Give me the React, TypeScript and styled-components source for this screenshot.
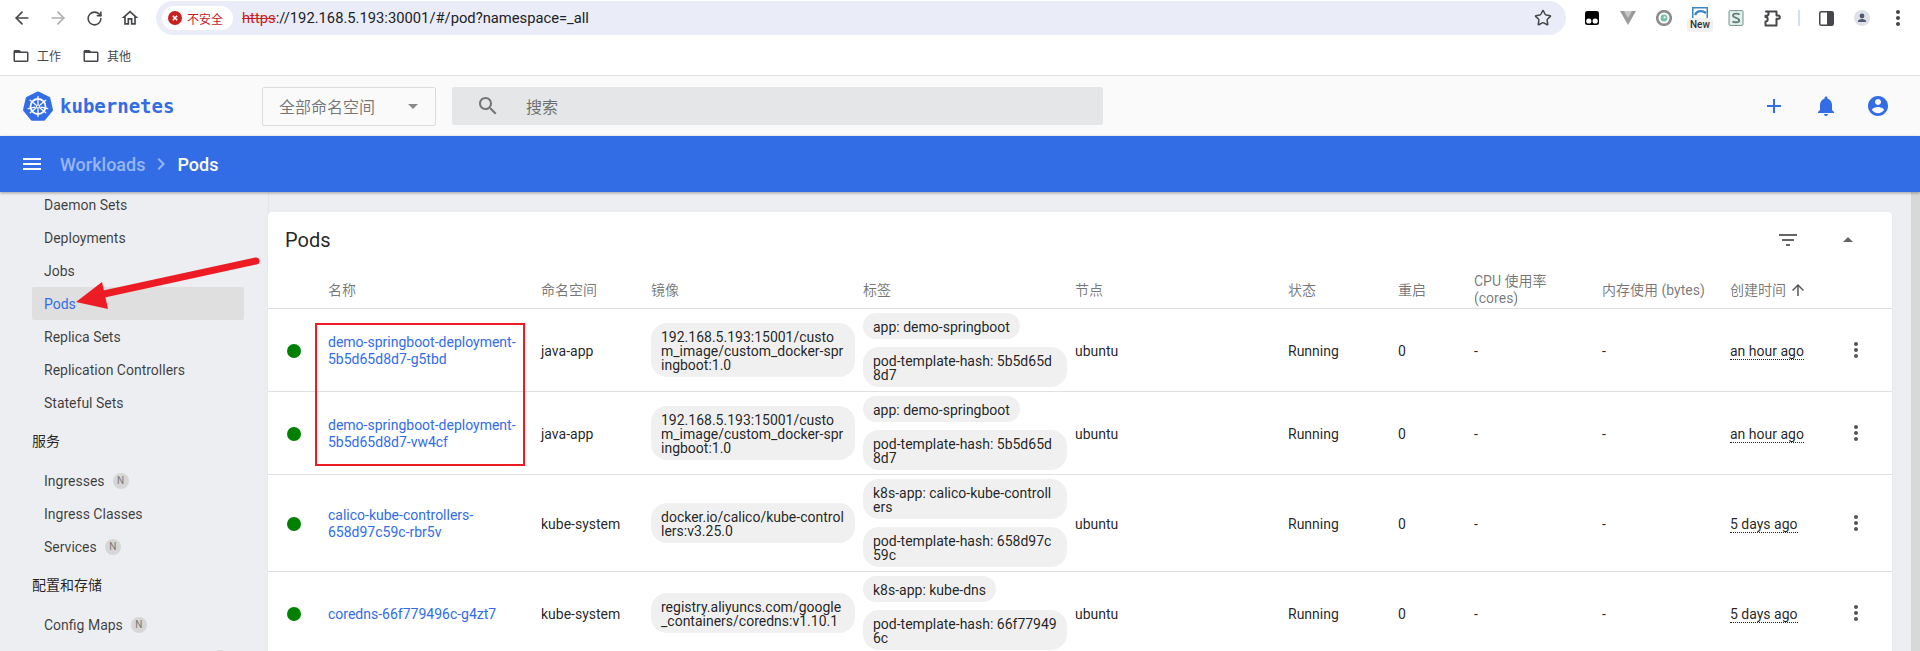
import { FC } from 'react';
import styled, { createGlobalStyle } from 'styled-components';
import { ArrowLeft, ArrowRight, RotateCw, Star } from 'lucide-react';

const FONT = `Roboto, "Noto Sans CJK SC", sans-serif`;
const BLUE = '#326de6';

const paths = {
  home: 'M12 5.69l5 4.5V18h-2v-6H9v6H7v-7.81l5-4.5M12 3L2 12h3v8h6v-6h2v6h6v-8h3L12 3z',
  folder:
    'M20 6h-8l-2-2H4c-1.1 0-1.99.9-1.99 2L2 18c0 1.1.9 2 2 2h16c1.1 0 2-.9 2-2V8c0-1.1-.9-2-2-2zm0 12H4V8h16v10z',
  search:
    'M15.5 14h-.79l-.28-.27C15.41 12.59 16 11.11 16 9.5 16 5.91 13.09 3 9.5 3S3 5.91 3 9.5 5.91 16 9.5 16c1.61 0 3.09-.59 4.23-1.57l.27.28v.79l5 4.99L20.49 19l-4.99-5zm-6 0C7.01 14 5 11.99 5 9.5S7.01 5 9.5 5 14 7.01 14 9.5 11.99 14 9.5 14z',
  plus: 'M19 13h-6v6h-2v-6H5v-2h6V5h2v6h6v2z',
  bell: 'M12 22c1.1 0 2-.9 2-2h-4c0 1.1.89 2 2 2zm6-6v-5c0-3.07-1.64-5.64-4.5-6.32V4c0-.83-.67-1.5-1.5-1.5s-1.5.67-1.5 1.5v.68C7.63 5.36 6 7.92 6 11v5l-2 2v1h16v-1l-2-2z',
  account:
    'M12 2C6.48 2 2 6.48 2 12s4.48 10 10 10 10-4.48 10-10S17.52 2 12 2zm0 3c1.66 0 3 1.34 3 3s-1.34 3-3 3-3-1.34-3-3 1.34-3 3-3zm0 14.2c-2.5 0-4.71-1.28-6-3.22.03-1.99 4-3.08 6-3.08 1.99 0 5.97 1.09 6 3.08-1.29 1.94-3.5 3.22-6 3.22z',
  menu: 'M3 18h18v-2H3v2zm0-5h18v-2H3v2zm0-7v2h18V6H3z',
  chevron: 'M10 6L8.59 7.41 13.17 12l-4.58 4.59L10 18l6-6z',
  more: 'M12 8c1.1 0 2-.9 2-2s-.9-2-2-2-2 .9-2 2 .9 2 2 2zm0 2c-1.1 0-2 .9-2 2s.9 2 2 2 2-.9 2-2-.9-2-2-2zm0 6c-1.1 0-2 .9-2 2s.9 2 2 2 2-.9 2-2-.9-2-2-2z',
  arrowUp: 'M4 12l1.41 1.41L11 7.83V20h2V7.83l5.58 5.59L20 12l-8-8-8 8z',
  filter: 'M10 18h4v-2h-4v2zM3 6v2h18V6H3zm3 7h12v-2H6v2z',
  caretUp: 'M7 14l5-5 5 5z',
  caretDown: 'M7 10l5 5 5-5z',
};

const GlobalStyle = createGlobalStyle`
  html, body {
    margin: 0;
    padding: 0;
    background: #edeef1;
    overflow: hidden;
  }
  * {
    box-sizing: border-box;
  }
`;

const Page = styled.div`
  position: relative;
  width: 1920px;
  height: 651px;
  overflow: hidden;
  display: flex;
  flex-direction: column;
  font-family: ${FONT};
  font-size: 14px;
  color: rgba(0, 0, 0, 0.87);
`;

const BrowserChrome = styled.div`
  flex: none;
  height: 76px;
  background: #fff;
  border-bottom: 1px solid #dfdfe1;
`;

const NavRow = styled.div`
  display: flex;
  align-items: flex-start;
  height: 36px;
`;

const NavButtons = styled.div`
  display: flex;
  width: 156px;
  padding-left: 4px;
`;

const NavButton = styled.div<{ $dim?: boolean }>`
  width: 36px;
  height: 36px;
  display: flex;
  align-items: center;
  justify-content: center;
  color: ${({ $dim }) => ($dim ? '#adaeb0' : '#45474a')};
`;

const AddressBar = styled.div`
  width: 1410px;
  height: 34px;
  margin-top: 1px;
  border-radius: 17px;
  background: #eaedf7;
  display: flex;
  align-items: center;
  padding: 0 14px 0 6px;
`;

const SecurityPill = styled.div`
  height: 24px;
  width: 71px;
  flex: none;
  border-radius: 12px;
  background: #fff;
  display: flex;
  align-items: center;
  gap: 5px;
  padding-left: 6px;
  font-size: 12px;
  color: #c5221f;
  white-space: nowrap;
`;

const Url = styled.div`
  margin-left: 9px;
  font-size: 14.75px;
  color: #202124;
  white-space: nowrap;
`;

const Scheme = styled.span`
  color: #c5221f;
  text-decoration: line-through;
`;

const StarButton = styled.div`
  margin-left: auto;
  display: flex;
  color: #45474a;
`;

const ExtTray = styled.div`
  display: flex;
  align-items: center;
  height: 36px;
  margin-left: 8px;
`;

const ExtSlot = styled.div`
  position: relative;
  width: 36px;
  height: 36px;
  display: flex;
  align-items: center;
  justify-content: center;
  color: #45474a;
`;

const TraySeparator = styled.div`
  width: 2px;
  height: 16px;
  margin: 0 8px;
  background: #cfdff8;
`;

const NewBadge = styled.span`
  position: absolute;
  left: 5px;
  top: 18px;
  padding: 0 3px;
  height: 14px;
  line-height: 14px;
  border-radius: 3px;
  background: #f1f1f1;
  font-size: 10px;
  font-weight: 500;
  color: #333;
`;

const BookmarksRow = styled.div`
  display: flex;
  align-items: center;
  height: 39px;
  padding: 0 0 0 12px;
  gap: 21px;
`;

const Bookmark = styled.div`
  display: flex;
  align-items: center;
  gap: 7px;
  font-size: 12px;
  color: #45474a;
`;

const AppBar = styled.div`
  flex: none;
  height: 60px;
  background: #fafafa;
  display: flex;
  align-items: center;
  padding-left: 23px;
`;

const Brand = styled.div`
  width: 239px;
  flex: none;
  display: flex;
  align-items: center;
  gap: 7px;
  color: ${BLUE};
`;

const BrandName = styled.span`
  font-family: 'DejaVu Sans Mono', monospace;
  font-size: 19px;
  font-weight: 700;
`;

const NamespaceSelect = styled.div`
  width: 174px;
  height: 39px;
  flex: none;
  border: 1px solid #dcdcdc;
  border-radius: 2px;
  display: flex;
  align-items: center;
  padding: 0 10px 0 16px;
  justify-content: space-between;
  font-size: 16px;
  color: rgba(0, 0, 0, 0.54);
`;

const SearchBox = styled.div`
  width: 651px;
  height: 38px;
  flex: none;
  margin-left: 16px;
  border-radius: 2px;
  background: #e4e6e7;
  display: flex;
  align-items: center;
  gap: 26px;
  padding-left: 24px;
  font-size: 16px;
  color: rgba(0, 0, 0, 0.54);
`;

const AppActions = styled.div`
  margin-left: auto;
  display: flex;
  gap: 28px;
  padding-right: 30px;
`;

const ActionBar = styled.div`
  position: relative;
  z-index: 2;
  flex: none;
  height: 56px;
  background: ${BLUE};
  box-shadow: 0 1px 3px rgba(0, 0, 0, 0.35);
  display: flex;
  align-items: center;
  padding-left: 20px;
  font-size: 18px;
  font-weight: 500;
  color: #fff;
`;

const Crumb = styled.span<{ $muted?: boolean }>`
  color: ${({ $muted }) => ($muted ? 'rgba(255,255,255,0.5)' : '#fff')};
`;

const CrumbSeparator = styled.span`
  display: flex;
  margin: 0 4px;
`;

const MenuGap = styled.div`
  width: 16px;
`;

const Body = styled.div`
  flex: 1;
  min-height: 0;
  display: flex;
  background: #edeef1;
`;

const Sidebar = styled.nav`
  width: 268px;
  flex: none;
  padding: 0 24px 0 32px;
  margin-top: -4px;
  box-shadow: 1px 0 1px rgba(0, 0, 0, 0.04);
`;

const SideSection = styled.div`
  height: 45px;
  line-height: 45px;
  color: rgba(0, 0, 0, 0.87);
`;

const SideItem = styled.div<{ $active?: boolean }>`
  height: 33px;
  display: flex;
  align-items: center;
  gap: 8px;
  padding-left: 12px;
  white-space: nowrap;
  border-radius: 2px;
  color: ${({ $active }) => ($active ? BLUE : 'rgba(0,0,0,0.75)')};
  background: ${({ $active }) => ($active ? '#dfdfdf' : 'transparent')};
`;

const NewChip = styled.span`
  width: 16px;
  height: 16px;
  border-radius: 50%;
  background: #d6d6d6;
  color: #777;
  font-size: 10px;
  line-height: 16px;
  text-align: center;
`;

const Main = styled.main`
  flex: 1;
  min-width: 0;
  padding: 20px 19px 0 0;
`;

const ScrollTrack = styled.div`
  width: 9px;
  flex: none;
  background: #d8d8d8;
`;

const Card = styled.section`
  background: #fff;
  border-radius: 4px;
  box-shadow: 0 1px 2px rgba(0, 0, 0, 0.1);
`;

const CardTitleRow = styled.div`
  height: 56px;
  display: flex;
  align-items: center;
  justify-content: space-between;
  padding: 0 32px 0 17px;
`;

const CardTitle = styled.h2`
  margin: 0;
  font-size: 20px;
  font-weight: 400;
`;

const CardActions = styled.div`
  display: flex;
  gap: 36px;
`;

const COLUMNS = '60px 213px 110px 212px 212px 213px 110px 76px 128px 128px 114px 24px';

const HeaderRow = styled.div`
  display: grid;
  grid-template-columns: ${COLUMNS};
  height: 40px;
  align-items: center;
  line-height: 17px;
  color: rgba(0, 0, 0, 0.54);
`;

const HeaderCell = styled.div`
  padding: 4px 16px 0 0;
  display: flex;
  align-items: center;
`;

const SortArrow = styled.span`
  display: flex;
  margin-left: 3px;
`;

const PodRow = styled.div`
  display: grid;
  grid-template-columns: ${COLUMNS};
  align-items: center;
  padding: 4px 0;
  border-top: 1px solid #e0e0e0;
`;

const StatusDot = styled.span`
  display: block;
  width: 14px;
  height: 14px;
  margin: 2px 0 0 19px;
  border-radius: 50%;
  background: #008000;
`;

const PodName = styled.a`
  display: block;
  padding: 2px 16px 0 0;
  line-height: 17px;
  color: ${BLUE};
`;

const TextCell = styled.div`
  padding-top: 2px;
`;

const ChipStack = styled.div`
  display: flex;
  flex-direction: column;
  align-items: flex-start;
  gap: 8px;
`;

const Chip = styled.span<{ $wide?: boolean }>`
  display: block;
  width: ${({ $wide }) => ($wide ? '204px' : 'fit-content')};
  max-width: 204px;
  padding: 7px 10px 5px;
  border-radius: 16px;
  background: #f0f0f0;
  line-height: 14px;
  word-break: break-all;
`;

const RelativeTime = styled.span`
  display: inline-block;
  line-height: 15px;
  border-bottom: 1px dotted rgba(0, 0, 0, 0.87);
`;

const RedBox = styled.div`
  position: absolute;
  left: 315px;
  top: 323px;
  width: 210px;
  height: 143px;
  border: 2px solid #ed1c24;
`;

const ArrowOverlay = styled.svg`
  position: absolute;
  left: 70px;
  top: 250px;
`;

const IconSvg = styled.svg<{ $color?: string }>`
  display: block;
  flex: none;
  fill: ${({ $color }) => $color ?? 'currentColor'};
`;

const Icon: FC<{ d: string; size?: number; color?: string }> = ({ d, size = 24, color }) => (
  <IconSvg width={size} height={size} viewBox="0 0 24 24" $color={color}>
    <path d={d} />
  </IconSvg>
);

const KubeLogo: FC = () => (
  <svg width="30" height="30" viewBox="0 0 30 30">
    <path
      d="M15 1.5 26.2 6.9 29 19 21.2 28.7H8.8L1 19 3.8 6.9Z"
      fill={BLUE}
      stroke={BLUE}
      strokeWidth="2"
      strokeLinejoin="round"
    />
    <g stroke="#fff" fill="none" strokeLinecap="round">
      <circle cx="15" cy="15.5" r="7.5" strokeWidth="1.8" />
      <circle cx="15" cy="15.5" r="1.6" strokeWidth="1.2" />
      <path
        d="M15 5.5V12.5M15 18.5V25.5M7.2 9.3 12.7 13.7M17.3 17.3 22.8 21.7M22.8 9.3 17.3 13.7M12.7 17.3 7.2 21.7M5.3 17.7 12 16.2M18 16.2 24.7 17.7"
        strokeWidth="1.3"
      />
    </g>
  </svg>
);

const ShieldError: FC = () => (
  <svg width="14" height="14" viewBox="0 0 14 14">
    <circle cx="7" cy="7" r="7" fill="#c5221f" />
    <path d="M4.8 4.8l4.4 4.4M9.2 4.8l-4.4 4.4" stroke="#fff" strokeWidth="1.6" />
  </svg>
);

const PuzzleIcon: FC = () => (
  <svg width="18" height="17" viewBox="0 0 18 17">
    <path
      d="M3 1.5H13.5V5.6H15.2A1.6 1.6 0 0 1 15.2 8.8H13.5V15.5H2.5V11.4A2.2 2.2 0 0 0 2.5 7V5.8H3.8A2 2 0 0 0 3 1.5Z"
      fill="none"
      stroke="#45474a"
      strokeWidth="2"
      strokeLinejoin="round"
    />
  </svg>
);

const ExtensionIcons: FC = () => (
  <ExtTray>
    <ExtSlot>
      <svg width="14" height="14" viewBox="0 0 14 14">
        <rect width="14" height="14" rx="2.5" fill="#000" />
        <circle cx="3.8" cy="10" r="2.6" fill="#fff" />
        <circle cx="10.2" cy="10" r="2.6" fill="#fff" />
      </svg>
    </ExtSlot>
    <ExtSlot>
      <svg width="16" height="14" viewBox="0 0 16 14">
        <path d="M0 0h16L8 14Z" fill="#9b9b9b" />
        <path d="M4 0h8L8 7Z" fill="#c9c9c9" />
      </svg>
    </ExtSlot>
    <ExtSlot>
      <svg width="16" height="16" viewBox="0 0 16 16">
        <circle cx="8" cy="8" r="6.8" fill="none" stroke="#8c8c8c" strokeWidth="2.6" />
        <circle cx="8" cy="8" r="3.4" fill="#6fc0ab" />
        <circle cx="8.6" cy="7.4" r="1.1" fill="#fff" />
      </svg>
    </ExtSlot>
    <ExtSlot>
      <svg width="16" height="16" viewBox="0 0 16 16" style={{ marginTop: -6 }}>
        <rect x="0.75" y="0.75" width="14.5" height="14.5" fill="#fff" stroke="#3c85c6" strokeWidth="1.5" />
        <path d="M3 8C5 3.5 10 3 14 6" fill="none" stroke="#3c85c6" strokeWidth="2.4" />
      </svg>
      <NewBadge>New</NewBadge>
    </ExtSlot>
    <ExtSlot>
      <svg width="16" height="16" viewBox="0 0 16 16">
        <rect x="1" y="0.6" width="14" height="14.8" rx="1" fill="#dff3ee" stroke="#7a8f8a" strokeWidth="1" />
        <path
          d="M11.4 4.6C10.6 3.4 5 3 5 5.6 5 8.4 11.2 7.4 11.2 10.4 11.2 13 5.4 12.6 4.6 11.2"
          fill="none"
          stroke="#6e7b78"
          strokeWidth="1.9"
        />
      </svg>
    </ExtSlot>
    <ExtSlot>
      <PuzzleIcon />
    </ExtSlot>
    <TraySeparator />
    <ExtSlot>
      <svg width="15" height="15" viewBox="0 0 15 15">
        <rect x="0.75" y="0.75" width="13.5" height="13.5" rx="1.5" fill="#fff" stroke="#45474a" strokeWidth="1.5" />
        <rect x="8" y="1" width="6" height="13" fill="#45474a" />
      </svg>
    </ExtSlot>
    <ExtSlot>
      <svg width="16" height="16" viewBox="0 0 16 16">
        <circle cx="8" cy="8" r="8" fill="#dfe1e8" />
        <circle cx="8" cy="6" r="2.4" fill="#4d5a70" />
        <path d="M3.8 12c0-2 2.2-2.9 4.2-2.9s4.2.9 4.2 2.9Z" fill="#4d5a70" />
      </svg>
    </ExtSlot>
    <ExtSlot>
      <Icon d={paths.more} size={24} color="#45474a" />
    </ExtSlot>
  </ExtTray>
);

const sideTop = ['Daemon Sets', 'Deployments', 'Jobs', 'Pods', 'Replica Sets', 'Replication Controllers', 'Stateful Sets'];

const headers = ['', '名称', '命名空间', '镜像', '标签', '节点', '状态', '重启', 'CPU 使用率 (cores)', '内存使用 (bytes)'];

interface Pod {
  name: string;
  namespace: string;
  image: string;
  labels: string[];
  age: string;
}

const pods: Pod[] = [
  {
    name: 'demo-springboot-deployment-5b5d65d8d7-g5tbd',
    namespace: 'java-app',
    image: '192.168.5.193:15001/custom_image/custom_docker-springboot:1.0',
    labels: ['app: demo-springboot', 'pod-template-hash: 5b5d65d8d7'],
    age: 'an hour ago',
  },
  {
    name: 'demo-springboot-deployment-5b5d65d8d7-vw4cf',
    namespace: 'java-app',
    image: '192.168.5.193:15001/custom_image/custom_docker-springboot:1.0',
    labels: ['app: demo-springboot', 'pod-template-hash: 5b5d65d8d7'],
    age: 'an hour ago',
  },
  {
    name: 'calico-kube-controllers-658d97c59c-rbr5v',
    namespace: 'kube-system',
    image: 'docker.io/calico/kube-controllers:v3.25.0',
    labels: ['k8s-app: calico-kube-controllers', 'pod-template-hash: 658d97c59c'],
    age: '5 days ago',
  },
  {
    name: 'coredns-66f779496c-g4zt7',
    namespace: 'kube-system',
    image: 'registry.aliyuncs.com/google_containers/coredns:v1.10.1',
    labels: ['k8s-app: kube-dns', 'pod-template-hash: 66f779496c'],
    age: '5 days ago',
  },
];

export default function App() {
  return (
    <Page>
      <GlobalStyle />
      <BrowserChrome>
        <NavRow>
          <NavButtons>
            <NavButton>
              <ArrowLeft size={20} strokeWidth={2} />
            </NavButton>
            <NavButton $dim>
              <ArrowRight size={20} strokeWidth={2} />
            </NavButton>
            <NavButton>
              <RotateCw size={17} strokeWidth={2.2} />
            </NavButton>
            <NavButton>
              <Icon d={paths.home} size={20} />
            </NavButton>
          </NavButtons>
          <AddressBar>
            <SecurityPill>
              <ShieldError />
              不安全
            </SecurityPill>
            <Url>
              <Scheme>https</Scheme>://192.168.5.193:30001/#/pod?namespace=_all
            </Url>
            <StarButton>
              <Star size={18} strokeWidth={2} />
            </StarButton>
          </AddressBar>
          <ExtensionIcons />
        </NavRow>
        <BookmarksRow>
          <Bookmark>
            <Icon d={paths.folder} size={18} />
            工作
          </Bookmark>
          <Bookmark>
            <Icon d={paths.folder} size={18} />
            其他
          </Bookmark>
        </BookmarksRow>
      </BrowserChrome>

      <AppBar>
        <Brand>
          <KubeLogo />
          <BrandName>kubernetes</BrandName>
        </Brand>
        <NamespaceSelect>
          全部命名空间
          <Icon d={paths.caretDown} color="#8a8a8a" />
        </NamespaceSelect>
        <SearchBox>
          <Icon d={paths.search} color="#757575" />
          搜索
        </SearchBox>
        <AppActions>
          <Icon d={paths.plus} color={BLUE} />
          <Icon d={paths.bell} color={BLUE} />
          <Icon d={paths.account} color={BLUE} />
        </AppActions>
      </AppBar>

      <ActionBar>
        <Icon d={paths.menu} />
        <MenuGap />
        <Crumb $muted>Workloads</Crumb>
        <CrumbSeparator>
          <Icon d={paths.chevron} color="rgba(255,255,255,0.5)" />
        </CrumbSeparator>
        <Crumb>Pods</Crumb>
      </ActionBar>

      <Body>
        <Sidebar>
          {sideTop.map((item) => (
            <SideItem key={item} $active={item === 'Pods'}>
              {item}
            </SideItem>
          ))}
          <SideSection>服务</SideSection>
          <SideItem>
            Ingresses <NewChip>N</NewChip>
          </SideItem>
          <SideItem>Ingress Classes</SideItem>
          <SideItem>
            Services <NewChip>N</NewChip>
          </SideItem>
          <SideSection>配置和存储</SideSection>
          <SideItem>
            Config Maps <NewChip>N</NewChip>
          </SideItem>
          <SideItem>
            Persistent Volume Claims <NewChip>N</NewChip>
          </SideItem>
        </Sidebar>

        <Main>
          <Card>
            <CardTitleRow>
              <CardTitle>Pods</CardTitle>
              <CardActions>
                <Icon d={paths.filter} color="#666" />
                <Icon d={paths.caretUp} color="#666" />
              </CardActions>
            </CardTitleRow>
            <HeaderRow>
              {headers.map((h) => (
                <HeaderCell key={h}>{h}</HeaderCell>
              ))}
              <HeaderCell>
                创建时间
                <SortArrow>
                  <Icon d={paths.arrowUp} size={18} color="#555" />
                </SortArrow>
              </HeaderCell>
            </HeaderRow>
            {pods.map((pod) => (
              <PodRow key={pod.name}>
                <StatusDot />
                <PodName>{pod.name}</PodName>
                <TextCell>{pod.namespace}</TextCell>
                <Chip $wide>{pod.image}</Chip>
                <ChipStack>
                  {pod.labels.map((label) => (
                    <Chip key={label}>{label}</Chip>
                  ))}
                </ChipStack>
                <TextCell>ubuntu</TextCell>
                <TextCell>Running</TextCell>
                <TextCell>0</TextCell>
                <TextCell>-</TextCell>
                <TextCell>-</TextCell>
                <TextCell>
                  <RelativeTime>{pod.age}</RelativeTime>
                </TextCell>
                <Icon d={paths.more} color="#555" />
              </PodRow>
            ))}
          </Card>
        </Main>
        <ScrollTrack />
      </Body>

      <RedBox />
      <ArrowOverlay width="195" height="65" viewBox="0 0 195 65">
        <path d="M186 11 34 44" stroke="#ed1c24" strokeWidth="7" strokeLinecap="round" fill="none" />
        <path d="M6 52 32 32 38 59Z" fill="#ed1c24" />
      </ArrowOverlay>
    </Page>
  );
}
